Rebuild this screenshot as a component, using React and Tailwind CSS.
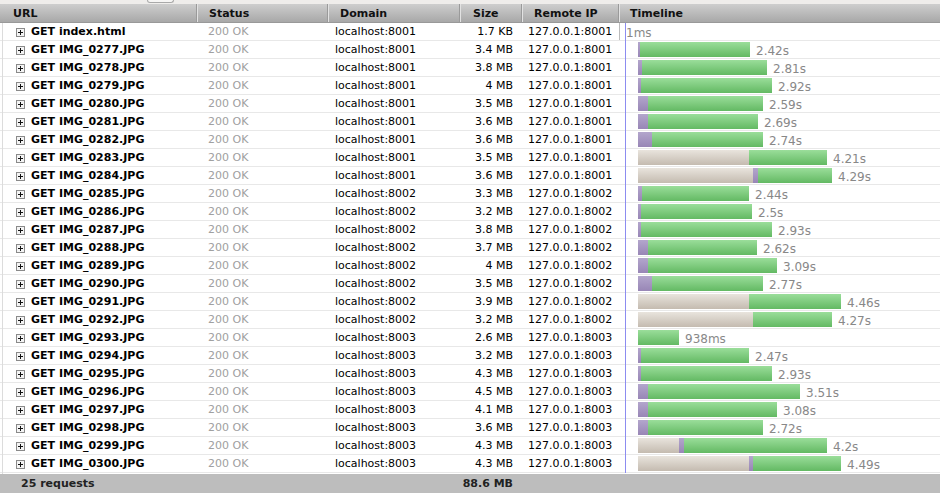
import React from "react";

const rows = [
  { f: "index.html", d: "8001", s: "1.7 KB", first: true },
  { f: "IMG_0277.JPG", d: "8001", s: "3.4 MB", b: [0, 2, 110], t: "2.42s" },
  { f: "IMG_0278.JPG", d: "8001", s: "3.8 MB", b: [0, 4, 125], t: "2.81s" },
  { f: "IMG_0279.JPG", d: "8001", s: "4 MB", b: [0, 3, 131], t: "2.92s" },
  { f: "IMG_0280.JPG", d: "8001", s: "3.5 MB", b: [0, 10, 115], t: "2.59s" },
  { f: "IMG_0281.JPG", d: "8001", s: "3.6 MB", b: [0, 10, 110], t: "2.69s" },
  { f: "IMG_0282.JPG", d: "8001", s: "3.6 MB", b: [0, 14, 111], t: "2.74s" },
  { f: "IMG_0283.JPG", d: "8001", s: "3.5 MB", b: [111, 0, 78], t: "4.21s" },
  { f: "IMG_0284.JPG", d: "8001", s: "3.6 MB", b: [115, 5, 74], t: "4.29s" },
  { f: "IMG_0285.JPG", d: "8002", s: "3.3 MB", b: [0, 4, 107], t: "2.44s" },
  { f: "IMG_0286.JPG", d: "8002", s: "3.2 MB", b: [0, 3, 111], t: "2.5s" },
  { f: "IMG_0287.JPG", d: "8002", s: "3.8 MB", b: [0, 3, 131], t: "2.93s" },
  { f: "IMG_0288.JPG", d: "8002", s: "3.7 MB", b: [0, 10, 109], t: "2.62s" },
  { f: "IMG_0289.JPG", d: "8002", s: "4 MB", b: [0, 10, 129], t: "3.09s" },
  { f: "IMG_0290.JPG", d: "8002", s: "3.5 MB", b: [0, 14, 111], t: "2.77s" },
  { f: "IMG_0291.JPG", d: "8002", s: "3.9 MB", b: [111, 0, 92], t: "4.46s" },
  { f: "IMG_0292.JPG", d: "8002", s: "3.2 MB", b: [115, 0, 79], t: "4.27s" },
  { f: "IMG_0293.JPG", d: "8003", s: "2.6 MB", b: [0, 0, 41], t: "938ms" },
  { f: "IMG_0294.JPG", d: "8003", s: "3.2 MB", b: [0, 3, 108], t: "2.47s" },
  { f: "IMG_0295.JPG", d: "8003", s: "4.3 MB", b: [0, 3, 131], t: "2.93s" },
  { f: "IMG_0296.JPG", d: "8003", s: "4.5 MB", b: [0, 10, 152], t: "3.51s" },
  { f: "IMG_0297.JPG", d: "8003", s: "4.1 MB", b: [0, 10, 129], t: "3.08s" },
  { f: "IMG_0298.JPG", d: "8003", s: "3.6 MB", b: [0, 10, 115], t: "2.72s" },
  { f: "IMG_0299.JPG", d: "8003", s: "4.3 MB", b: [41, 5, 143], t: "4.2s" },
  { f: "IMG_0300.JPG", d: "8003", s: "4.3 MB", b: [111, 4, 88], t: "4.49s" },
];

function Plus() {
  return (
    <svg width="9" height="9" viewBox="0 0 9 9" className="shrink-0">
      <rect x="0.5" y="0.5" width="8" height="8" fill="#f4f4f4" stroke="#8a8a8a" />
      <path d="M2 4.5h5M4.5 2v5" stroke="#111" strokeWidth="1" />
    </svg>
  );
}

function HeaderCell({ w, children, pl }) {
  return (
    <div
      className={`flex items-center pt-[2px] h-full border-r border-r-[#e2e2e2] shadow-[inset_-1px_0_0_#9a9a9a] ${w} ${pl}`}
    >
      {children}
    </div>
  );
}

export default function App() {
  return (
    <div
      className="w-[940px] h-[493px] overflow-hidden bg-white text-[11px] text-black"
      style={{ fontFamily: '"DejaVu Sans", Verdana, sans-serif' }}
    >
      <div className="h-[4px] bg-[#efedeb] flex">
        <div className="ml-[147px] w-[27px] h-[3px] border border-t-0 border-[#a9a9a9] rounded-b-[3px] bg-[#f6f5f4]" />
      </div>
      <div className="h-[19px] flex font-bold text-[#111] bg-gradient-to-b from-[#cecece] to-[#a8a8a8] border-b border-[#999]">
        <HeaderCell w="w-[198px]" pl="pl-[13px]">URL</HeaderCell>
        <HeaderCell w="w-[131px]" pl="pl-[11px]">Status</HeaderCell>
        <HeaderCell w="w-[132px]" pl="pl-[11px]">Domain</HeaderCell>
        <HeaderCell w="w-[62px]" pl="pl-[12px]">Size</HeaderCell>
        <HeaderCell w="w-[97px]" pl="pl-[11px]">Remote IP</HeaderCell>
        <div className="flex items-center pt-[2px] pl-[10px] flex-1">Timeline</div>
      </div>
      <div className="relative h-[451px]">
        <div className="absolute left-[2px] top-0 bottom-0 w-px bg-[#dcdcdc]" />
        <div className="absolute left-[625px] top-0 bottom-[1px] w-px bg-[#8c8cf0]" />
        {rows.map((r, i) => (
          <div key={i} className="h-[18px] flex items-center border-b border-[#e8e8e8]">
            <div className="w-[198px] flex items-center pl-[16px] gap-[6px] font-bold pt-[2px]">
              <Plus />
              <span>GET {r.f}</span>
            </div>
            <div className="w-[131px] pl-[10px] text-[#a0a0a0] pt-[2px]">200 OK</div>
            <div className="w-[132px] pl-[6px] pt-[2px]">localhost:{r.d}</div>
            <div className="w-[62px] text-right pr-[10px] pt-[2px]">{r.s}</div>
            <div className="w-[97px] pl-[5px] pt-[2px]">127.0.0.1:{r.d}</div>
            <div className="flex-1 h-full flex items-center">
              {r.first ? (
                <span className="h-full flex items-center pt-[2px] border-l border-[#bbb] ml-[-1px] pl-[6px] text-[#888] text-[12px]">1ms</span>
              ) : (
                <div className="flex items-center pl-[18px] h-full">
                  <div className="flex h-[15px]">
                    {r.b[0] > 0 && (
                      <div
                        className="h-full bg-gradient-to-b from-[#e9e4dd] to-[#c4bbb0]"
                        style={{ width: r.b[0] }}
                      />
                    )}
                    {r.b[1] > 0 && (
                      <div
                        className="h-full bg-gradient-to-b from-[#b3a6cc] to-[#9886b6]"
                        style={{ width: r.b[1] }}
                      />
                    )}
                    <div
                      className="h-full bg-gradient-to-b from-[#9ade9a] to-[#63b963]"
                      style={{ width: r.b[2] }}
                    />
                  </div>
                  <span className="ml-[6px] pt-[2px] text-[#888] text-[12px]">{r.t}</span>
                </div>
              )}
            </div>
          </div>
        ))}
      </div>
      <div className="h-[19px] flex items-center pt-[2px] font-bold text-[#222] bg-[#bdbdbd]">
        <div className="w-[461px] pl-[21px]">25 requests</div>
        <div className="w-[62px] text-right pr-[10px]">88.6 MB</div>
      </div>
    </div>
  );
}
